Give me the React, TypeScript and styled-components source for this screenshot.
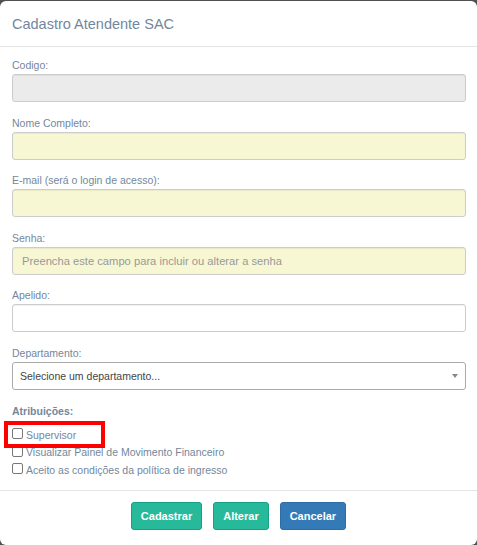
import styled, { createGlobalStyle } from "styled-components";

const GlobalStyle = createGlobalStyle`
    html, body {
        margin: 0;
        padding: 0;
        background: #505050;
    }
    body {
        font-family: "Liberation Sans", Arial, sans-serif;
        color: #73879C;
    }
`

const Modal = styled.div`
    position: relative;
    width: 477px;
    height: 544px;
    margin-top: 1px;
    background: #fff;
    border-radius: 6px;
    display: flex;
    flex-direction: column;
    box-sizing: border-box;
`

const Header = styled.div`
    height: 45px;
    padding: 0 12px;
    display: flex;
    align-items: center;
    border-bottom: 1px solid #e5e5e5;
`

const Title = styled.h4`
    margin: 0;
    font-size: 14.5px;
    font-weight: 400;
    color: #73879C;
`

const Body = styled.div`
    padding: 12px 11px 0 12px;
    display: flex;
    flex-direction: column;
`

const Group = styled.div<{ $last?: boolean }>`
    display: flex;
    flex-direction: column;
    gap: 2px;
    margin-bottom: ${p => (p.$last ? "15px" : "14.6px")};
`

const Label = styled.label<{ $bold?: boolean }>`
    font-size: 10.5px;
    line-height: 13px;
    font-weight: ${p => (p.$bold ? 700 : 400)};
    color: #73879C;
`

const Input = styled.input<{ $tone?: "gray" | "yellow" | "white" }>`
    height: 28px;
    box-sizing: border-box;
    border: 1px solid #ccc;
    border-radius: 3px;
    padding: 0 9px;
    font-family: "Liberation Sans", Arial, sans-serif;
    font-size: 11.2px;
    color: #555;
    outline: none;
    box-shadow: inset 0 1px 1px rgba(0, 0, 0, 0.06);
    background: ${p =>
        p.$tone === "gray" ? "#ebebeb" : p.$tone === "yellow" ? "#f7f7d4" : "#fff"};
    &::placeholder {
        color: #999;
    }
`

const Select = styled.div`
    height: 28px;
    box-sizing: border-box;
    border: 1px solid #aaa;
    border-radius: 3px;
    padding: 0 7px;
    display: flex;
    align-items: center;
    font-size: 10.5px;
    color: #444;
    background: #fff;
`

const Arrow = styled.span`
    margin-left: auto;
    width: 0;
    height: 0;
    border-left: 3px solid transparent;
    border-right: 3px solid transparent;
    border-top: 4px solid #888;
`

const Checks = styled.div`
    display: flex;
    flex-direction: column;
    margin-top: 8px;
`

const CheckRow = styled.label`
    display: flex;
    align-items: center;
    gap: 3px;
    height: 17.5px;
    font-size: 10.5px;
    color: #73879C;
`

const Box = styled.span`
    width: 9px;
    height: 9px;
    border: 1px solid #777;
    border-radius: 2px;
    background: #fff;
    margin-bottom: 2px;
`

const Highlight = styled.div`
    position: absolute;
    left: 4px;
    top: 420px;
    width: 101px;
    height: 27px;
    box-sizing: border-box;
    border: 4px solid #ff0000;
    pointer-events: none;
`

const Footer = styled.div`
    margin-top: auto;
    height: 55px;
    border-top: 1px solid #e5e5e5;
    display: flex;
    justify-content: center;
    align-items: flex-start;
    padding-top: 11px;
    gap: 11px;
    box-sizing: border-box;
`

const Button = styled.button<{ $variant: "success" | "primary" }>`
    height: 28px;
    padding: 0 9px;
    border-radius: 3px;
    font-family: "Liberation Sans", Arial, sans-serif;
    font-size: 11px;
    font-weight: 700;
    color: #fff;
    cursor: pointer;
    background: ${p => (p.$variant === "success" ? "#26B99A" : "#337ab7")};
    border: 1px solid ${p => (p.$variant === "success" ? "#169F85" : "#2e6da4")};
`

const fields = [
    { label: "Codigo:", tone: "gray" as const },
    { label: "Nome Completo:", tone: "yellow" as const },
    { label: "E-mail (será o login de acesso):", tone: "yellow" as const },
    { label: "Senha:", tone: "yellow" as const, placeholder: "Preencha este campo para incluir ou alterar a senha" },
    { label: "Apelido:", tone: "white" as const },
]

const checks = [
    "Supervisor",
    "Visualizar Painel de Movimento Financeiro",
    "Aceito as condições da política de ingresso",
]

export default function App() {
    return (
        <>
            <GlobalStyle />
            <Modal>
                <Header>
                    <Title>Cadastro Atendente SAC</Title>
                </Header>
                <Body>
                    {fields.map(f => (
                        <Group key={f.label}>
                            <Label>{f.label}</Label>
                            <Input $tone={f.tone} placeholder={f.placeholder} />
                        </Group>
                    ))}
                    <Group $last>
                        <Label>Departamento:</Label>
                        <Select>
                            Selecione um departamento...
                            <Arrow />
                        </Select>
                    </Group>
                    <Label $bold>Atribuições:</Label>
                    <Checks>
                        {checks.map(c => (
                            <CheckRow key={c}>
                                <Box />
                                {c}
                            </CheckRow>
                        ))}
                    </Checks>
                </Body>
                <Footer>
                    <Button $variant="success">Cadastrar</Button>
                    <Button $variant="success">Alterar</Button>
                    <Button $variant="primary">Cancelar</Button>
                </Footer>
                <Highlight />
            </Modal>
        </>
    )
}
